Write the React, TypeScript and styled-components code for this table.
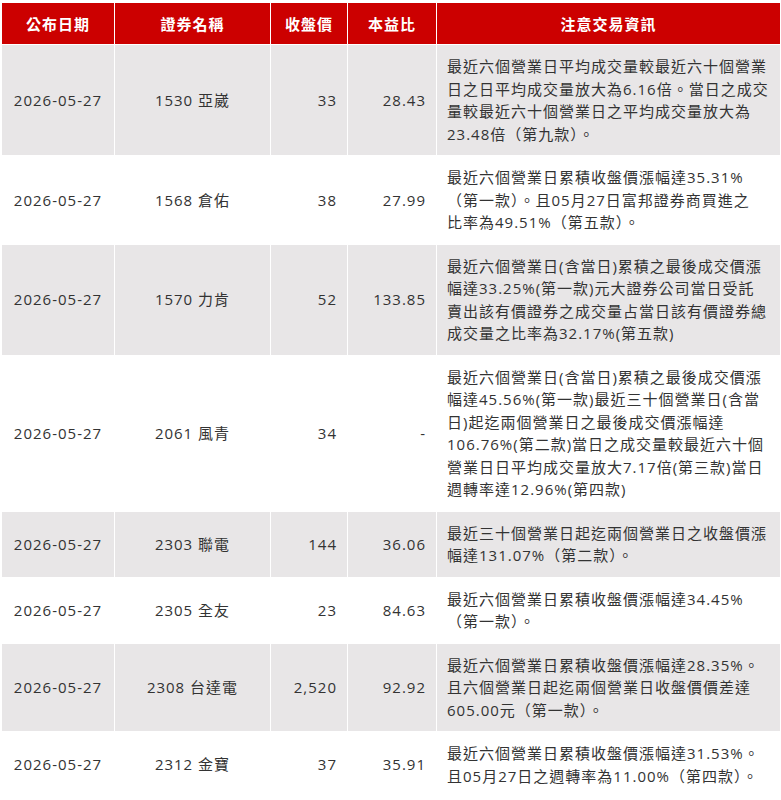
import { createGlobalStyle, styled } from 'styled-components';

const GlobalStyle = createGlobalStyle`
  html, body {
    margin: 0;
    padding: 0;
    background: #ffffff;
  }
  body {
    font-family: "Open Sans", "Noto Sans CJK TC", sans-serif;
  }
`;

const RED = '#cc0000';
const GRAY = '#e8e6e7';
const TEXT = '#333333';

const Wrap = styled.div`
  padding: 3px 0 0 2px;
`;
const Table = styled.table`
  width: 778px;
  border-collapse: separate;
  border-spacing: 0;
  table-layout: fixed;
  font-size: 15px;
  letter-spacing: 1px;
  color: ${TEXT};
`;
const HeadCell = styled.th<{ $w: number }>`
  width: ${(p) => p.$w}px;
  height: 42px;
  padding: 0;
  background: ${RED};
  color: #ffffff;
  font-family: "Noto Sans CJK TC", sans-serif;
  font-weight: 700;
  text-align: center;
  vertical-align: middle;
  border-right: 1px solid #ffffff;
  border-bottom: 1px solid #ffffff;
  box-sizing: border-box;
  &:last-child {
    border-right: none;
  }
`;
const Row = styled.tr<{ $odd: boolean }>`
  background: ${(p) => (p.$odd ? GRAY : '#ffffff')};
`;
const Cell = styled.td<{ $align?: 'left' | 'center' | 'right' }>`
  padding: 10px 10px;
  line-height: 22.5px;
  text-align: ${(p) => p.$align || 'center'};
  vertical-align: middle;
  border-right: 1px solid #ffffff;
  border-bottom: 1px solid #ffffff;
  &:last-child {
    border-right: none;
  }
`;
const NoteCell = styled(Cell)`
  padding: 10px 12px 10px 10px;
`;
// the source wraps with its own font metrics, so keep its line breaks
const NoteLine = styled.span`
  display: block;
  white-space: nowrap;
`;

type Item = {
  date: string;
  name: string;
  price: string;
  pe: string;
  note: string[];
};

const columns = [
  { title: '公布日期', w: 113 },
  { title: '證券名稱', w: 156 },
  { title: '收盤價', w: 77 },
  { title: '本益比', w: 89 },
  { title: '注意交易資訊', w: 343 },
];

const items: Item[] = [
  {
    date: '2026-05-27',
    name: '1530 亞崴',
    price: '33',
    pe: '28.43',
    note: [
      '最近六個營業日平均成交量較最近六十個營業',
      '日之日平均成交量放大為6.16倍。當日之成交',
      '量較最近六十個營業日之平均成交量放大為',
      '23.48倍（第九款）。',
    ],
  },
  {
    date: '2026-05-27',
    name: '1568 倉佑',
    price: '38',
    pe: '27.99',
    note: [
      '最近六個營業日累積收盤價漲幅達35.31%',
      '（第一款）。且05月27日富邦證券商買進之',
      '比率為49.51%（第五款）。',
    ],
  },
  {
    date: '2026-05-27',
    name: '1570 力肯',
    price: '52',
    pe: '133.85',
    note: [
      '最近六個營業日(含當日)累積之最後成交價漲',
      '幅達33.25%(第一款)元大證券公司當日受託',
      '賣出該有價證券之成交量占當日該有價證券總',
      '成交量之比率為32.17%(第五款)',
    ],
  },
  {
    date: '2026-05-27',
    name: '2061 風青',
    price: '34',
    pe: '-',
    note: [
      '最近六個營業日(含當日)累積之最後成交價漲',
      '幅達45.56%(第一款)最近三十個營業日(含當',
      '日)起迄兩個營業日之最後成交價漲幅達',
      '106.76%(第二款)當日之成交量較最近六十個',
      '營業日日平均成交量放大7.17倍(第三款)當日',
      '週轉率達12.96%(第四款)',
    ],
  },
  {
    date: '2026-05-27',
    name: '2303 聯電',
    price: '144',
    pe: '36.06',
    note: ['最近三十個營業日起迄兩個營業日之收盤價漲', '幅達131.07%（第二款）。'],
  },
  {
    date: '2026-05-27',
    name: '2305 全友',
    price: '23',
    pe: '84.63',
    note: ['最近六個營業日累積收盤價漲幅達34.45%', '（第一款）。'],
  },
  {
    date: '2026-05-27',
    name: '2308 台達電',
    price: '2,520',
    pe: '92.92',
    note: [
      '最近六個營業日累積收盤價漲幅達28.35%。',
      '且六個營業日起迄兩個營業日收盤價價差達',
      '605.00元（第一款）。',
    ],
  },
  {
    date: '2026-05-27',
    name: '2312 金寶',
    price: '37',
    pe: '35.91',
    note: ['最近六個營業日累積收盤價漲幅達31.53%。', '且05月27日之週轉率為11.00%（第四款）。'],
  },
];

function App() {
  return (
    <Wrap>
      <GlobalStyle />
      <Table>
        <thead>
          <tr>
            {columns.map((c) => (
              <HeadCell key={c.title} $w={c.w}>
                {c.title}
              </HeadCell>
            ))}
          </tr>
        </thead>
        <tbody>
          {items.map((it, i) => (
            <Row key={it.name} $odd={i % 2 === 0}>
              <Cell>{it.date}</Cell>
              <Cell>{it.name}</Cell>
              <Cell $align="right">{it.price}</Cell>
              <Cell $align="right">{it.pe}</Cell>
              <NoteCell $align="left">
                {it.note.map((line) => (
                  <NoteLine key={line}>{line}</NoteLine>
                ))}
              </NoteCell>
            </Row>
          ))}
        </tbody>
      </Table>
    </Wrap>
  );
}

export default App;
